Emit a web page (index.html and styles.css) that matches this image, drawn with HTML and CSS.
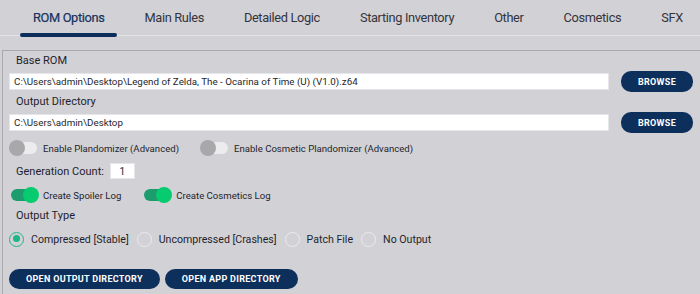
FILE: index.html
```html
<!DOCTYPE html>
<html>
<head>
    <title>ROM Options</title>
    <link rel="stylesheet" href="styles.css">
</head>
<body>
    <nav class="tabs">
        <a href="#" class="tab active">ROM Options</a>
        <a href="#" class="tab">Main Rules</a>
        <a href="#" class="tab">Detailed Logic</a>
        <a href="#" class="tab">Starting Inventory</a>
        <a href="#" class="tab">Other</a>
        <a href="#" class="tab">Cosmetics</a>
        <a href="#" class="tab">SFX</a>
    </nav>

    <section class="panel">
        <div class="label">Base ROM</div>
        <div class="file-row">
            <input type="text" class="path" value="C:\Users\admin\Desktop\Legend of Zelda, The - Ocarina of Time (U) (V1.0).z64">
            <button type="button" class="btn browse">Browse</button>
        </div>

        <div class="label">Output Directory</div>
        <div class="file-row">
            <input type="text" class="path" value="C:\Users\admin\Desktop">
            <button type="button" class="btn browse">Browse</button>
        </div>

        <div class="switch-row first">
            <label class="switch">
                <span class="track"><span class="knob"></span></span>
                Enable Plandomizer (Advanced)
            </label>
            <label class="switch">
                <span class="track"><span class="knob"></span></span>
                Enable Cosmetic Plandomizer (Advanced)
            </label>
        </div>

        <div class="count-row">
            <span>Generation Count:</span>
            <input type="text" class="count" value="1">
        </div>

        <div class="switch-row second">
            <label class="switch on">
                <span class="track"><span class="knob"></span></span>
                Create Spoiler Log
            </label>
            <label class="switch on">
                <span class="track"><span class="knob"></span></span>
                Create Cosmetics Log
            </label>
        </div>

        <div class="label type-label">Output Type</div>
        <div class="radio-row">
            <label class="radio checked"><span class="dot"></span>Compressed [Stable]</label>
            <label class="radio"><span class="dot"></span>Uncompressed [Crashes]</label>
            <label class="radio"><span class="dot"></span>Patch File</label>
            <label class="radio"><span class="dot"></span>No Output</label>
        </div>

        <div class="actions">
            <button type="button" class="btn wide">Open Output Directory</button>
            <button type="button" class="btn wide">Open App Directory</button>
        </div>
    </section>
</body>
</html>
```

FILE: styles.css
```css
body {
    margin: 0;
    background-color: #d2d1d6;
    font-family: Roboto, "Liberation Sans", sans-serif;
    color: #1f1f2b;
    overflow: hidden;
}

/* Tabs */
.tabs {
    display: flex;
    gap: 14px;
    height: 35px;
    padding-left: 20px;
    border-bottom: 1px solid #e4e3e8;
    white-space: nowrap;
}

.tab {
    position: relative;
    flex-shrink: 0;
    padding: 0 13px;
    line-height: 35px;
    font-size: 12.8px;
    letter-spacing: -0.35px;
    color: #34343c;
    text-decoration: none;
}

.tab.active {
    color: #14325e;
    -webkit-text-stroke: 0.2px #14325e;
}

.tab.active::after {
    content: "";
    position: absolute;
    left: 0;
    right: 0;
    bottom: -2px;
    height: 4px;
    border-radius: 2px;
    background-color: #0d2e5a;
}

/* Panel */
.panel {
    margin: 14px 0 0 2px;
    padding: 3px 7px 20px 6px;
    border-top: 1px solid #a9a9ae;
    border-left: 1px solid #a9a9ae;
}

.label {
    margin-left: 7px;
    font-size: 11px;
    line-height: 14px;
}

.file-row {
    display: flex;
    align-items: center;
    gap: 12px;
    height: 21px;
    margin: 3px 0;
}

.path {
    flex: 1;
    height: 17px;
    box-sizing: border-box;
    padding: 0 4px;
    border: 1px solid #e6e6ea;
    background: #fff;
    font-family: Roboto, "Liberation Sans", sans-serif;
    font-size: 9.8px;
    color: #1f1f2b;
}

.btn {
    border: none;
    border-radius: 10px;
    background-color: #0d2f5c;
    color: #fff;
    font-family: Roboto, "Liberation Sans", sans-serif;
    font-weight: bold;
    font-size: 9px;
    letter-spacing: 0.3px;
    text-transform: uppercase;
    cursor: pointer;
}

.browse {
    width: 72px;
    height: 21px;
}

/* Switches */
.switch-row {
    display: flex;
    height: 16px;
    align-items: center;
    gap: 21px;
}

.switch-row.first {
    margin-top: 7px;
}

.switch-row.second {
    margin-top: 8px;
}

.switch {
    display: flex;
    align-items: center;
    gap: 6px;
    font-size: 9.6px;
}

.track {
    position: relative;
    width: 26px;
    height: 12px;
    margin-left: 2px;
    border-radius: 6px;
    background-color: #ececee;
}

.knob {
    position: absolute;
    left: -2px;
    top: -2px;
    width: 16px;
    height: 16px;
    border-radius: 50%;
    background-color: #a8a8ab;
}

.switch.on .track {
    background-color: #1d9c6e;
}

.switch.on .knob {
    left: auto;
    right: -2px;
    background-color: #06cb6f;
}

.count-row {
    display: flex;
    align-items: center;
    gap: 6px;
    height: 16px;
    margin: 7px 0 0 7px;
    font-size: 11px;
}

.count {
    width: 25px;
    height: 16px;
    box-sizing: border-box;
    border: 1px solid #e6e6ea;
    background: #fff;
    text-align: center;
    font-family: Roboto, "Liberation Sans", sans-serif;
    font-size: 10px;
    color: #1f1f2b;
}

.type-label {
    margin-top: 6px;
}

/* Radios */
.radio-row {
    display: flex;
    align-items: center;
    gap: 8px;
    height: 16px;
    margin-top: 8px;
    font-size: 10.6px;
}

.radio {
    display: flex;
    align-items: center;
    gap: 7px;
}

.dot {
    position: relative;
    width: 15px;
    height: 15px;
    box-sizing: border-box;
    border: 1.5px solid #ececee;
    border-radius: 50%;
}

.radio.checked .dot {
    border-color: #22b584;
}

.radio.checked .dot::after {
    content: "";
    position: absolute;
    left: 2.5px;
    top: 2.5px;
    width: 7px;
    height: 7px;
    border-radius: 50%;
    background-color: #22b584;
}

.actions {
    display: flex;
    gap: 5px;
    margin-top: 22px;
}

.wide {
    height: 20px;
    padding: 0 17px;
}
```
